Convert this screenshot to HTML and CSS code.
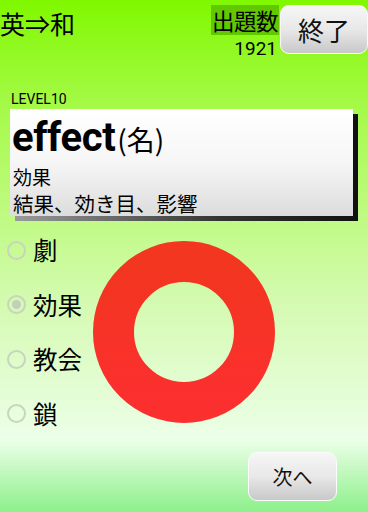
FILE: index.html
```html
<!DOCTYPE html>
<html lang="ja">
<head>
<meta charset="utf-8">
<link rel="stylesheet" href="styles.css">
</head>
<body>
<div class="screen">
  <header class="top">
    <div class="mode">英⇒和</div>
    <div class="count">
      <div class="count-label">出題数</div>
      <div class="count-num">1921</div>
    </div>
    <button class="btn btn-end">終了</button>
  </header>
  <div class="level">LEVEL10</div>
  <div class="card">
    <div class="word"><span class="word-en">effect</span><span class="word-pos">(名)</span></div>
    <div class="meaning">効果</div>
    <div class="meaning-more">結果、効き目、影響</div>
  </div>
  <ul class="choices">
    <li class="choice"><span class="radio"></span><span class="choice-text">劇</span></li>
    <li class="choice"><span class="radio radio-on"></span><span class="choice-text">効果</span></li>
    <li class="choice"><span class="radio"></span><span class="choice-text">教会</span></li>
    <li class="choice"><span class="radio"></span><span class="choice-text">鎖</span></li>
  </ul>
  <footer class="bottom">
    <button class="btn btn-next">次へ</button>
  </footer>
  <svg class="mark" width="184" height="184" viewBox="0 0 184 184">
    <defs>
      <linearGradient id="rg" x1="0" y1="0" x2="0" y2="1">
        <stop offset="0" stop-color="#f2361f"/>
        <stop offset="1" stop-color="#fc2f2f"/>
      </linearGradient>
    </defs>
    <circle cx="92" cy="92" r="70.5" fill="none" stroke="url(#rg)" stroke-width="41"/>
  </svg>
</div>
</body>
</html>
```

FILE: styles.css
```css
* { box-sizing: border-box; }
html, body { margin: 0; padding: 0; }
body {
  font-family: Roboto, "Noto Sans CJK JP", sans-serif;
  color: #000;
}
.screen {
  position: relative;
  z-index: 0;
  width: 368px;
  height: 512px;
  overflow: hidden;
  display: flex;
  flex-direction: column;
  background: linear-gradient(to bottom, #80f800 0px, #a6fa4a 110px, #d4fab0 300px, #ecffe8 440px, #8cf08a 512px);
}
.top {
  display: flex;
  align-items: flex-start;
  height: 62px;
  padding-top: 5px;
}
.mode {
  font-family: "Noto Sans CJK JP", sans-serif;
  font-size: 25px;
  line-height: 36px;
  flex: 1;
}
.count {
  display: flex;
  flex-direction: column;
  align-items: flex-end;
  width: 68px;
}
.count-label {
  font-family: "Noto Sans CJK JP", sans-serif;
  font-size: 22.5px;
  line-height: 30px;
  background: #62c800;
  padding: 0 1px;
  width: 68px;
  letter-spacing: -0.5px;
}
.count-num {
  font-size: 19px;
  line-height: 27px;
  padding-right: 2px;
}
.btn {
  font-family: "Noto Sans CJK JP", sans-serif;
  color: #111;
  border: 1.5px solid #fbfbfb;
  border-radius: 9px;
  background: linear-gradient(to bottom, #f6f6f6 0%, #e8e8e8 50%, #c8c8c8 100%);
  padding: 0;
  margin: 0;
}
.btn-end {
  width: 88px;
  height: 49px;
  margin-left: 1px;
  font-size: 26px;
  line-height: 1;
}
.level {
  font-size: 14px;
  line-height: 16px;
  padding-left: 11px;
  margin-top: 29px;
  height: 18px;
}
.card {
  position: relative;
  margin-left: 10px;
  width: 343px;
  height: 107px;
  background: linear-gradient(to bottom, #ffffff 0%, #f6f6f6 50%, #dcdcdc 100%);
  padding-left: 2px;
}
.card::before {
  content: "";
  position: absolute;
  left: 5px;
  top: 5px;
  width: 343px;
  height: 107px;
  background: linear-gradient(to right, #9a9a9a 0%, #333 60%, #111 100%);
  z-index: -1;
}
.word {
  height: 55px;
  display: flex;
  align-items: baseline;
  padding-top: 4px;
}
.word-en {
  font-weight: bold;
  font-size: 40px;
  line-height: 50px;
  letter-spacing: -0.4px;
}
.word-pos {
  font-family: "Noto Sans CJK JP", sans-serif;
  font-size: 28px;
  margin-left: 2px;
}
.meaning {
  font-family: "Noto Sans CJK JP", sans-serif;
  font-size: 19px;
  line-height: 26px;
  padding-left: 1px;
}
.meaning-more {
  font-family: "Noto Sans CJK JP", sans-serif;
  font-size: 20.5px;
  line-height: 26px;
  padding-left: 1px;
}
.choices {
  list-style: none;
  margin: 0;
  padding: 0;
  margin-top: 7px;
  display: flex;
  flex-direction: column;
}
.choice {
  display: flex;
  align-items: center;
  height: 54.5px;
  padding-left: 7px;
}
.radio {
  width: 19px;
  height: 19px;
  border: 2px solid #c7d5bf;
  border-radius: 50%;
  display: flex;
  align-items: center;
  justify-content: center;
  margin-right: 7px;
}
.radio-on::after {
  content: "";
  width: 9px;
  height: 9px;
  border-radius: 50%;
  background: #c3cfbd;
}
.choice-text {
  font-family: "Noto Sans CJK JP", sans-serif;
  font-size: 24.5px;
  line-height: 30px;
}
.bottom {
  margin-top: auto;
  display: flex;
  justify-content: flex-end;
  padding: 0 31px 11px 0;
}
.btn-next {
  width: 89px;
  height: 49px;
  font-size: 20px;
  line-height: 1;
}
.mark {
  position: absolute;
  left: 92px;
  top: 240px;
}
```
